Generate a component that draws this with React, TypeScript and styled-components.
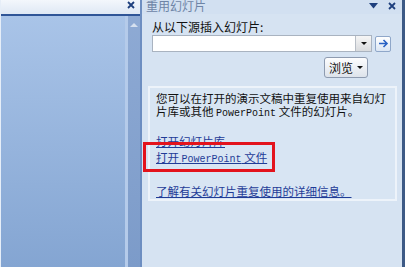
import React from "react";
import styled, { createGlobalStyle } from "styled-components";

const Global = createGlobalStyle`
  html, body { margin: 0; padding: 0; }
  body { width: 405px; height: 267px; overflow: hidden; font-family: "Noto Sans CJK SC", "Noto Sans", sans-serif; }
`;

const Frame = styled.div`
  position: relative;
  display: flex;
  width: 405px;
  height: 267px;
  overflow: hidden;
`;

const LeftPane = styled.div`
  width: 140px;
  display: flex;
  flex-direction: column;
  border-left: 1px solid #e6eef8;
  box-sizing: border-box;
`;

const LeftHeader = styled.div`
  height: 13px;
  background: linear-gradient(#f3f7fc, #dfe8f4);
  border-bottom: 2px solid #2f5597;
  display: flex;
  justify-content: flex-end;
  align-items: flex-start;
  padding: 1px 5px 0 0;
  box-sizing: content-box;
`;

const LeftBody = styled.div`
  flex: 1;
  display: flex;
  background: linear-gradient(#a9c4e8, #84a5d2);
`;

const LeftMain = styled.div`
  flex: 1;
`;

const Scroll = styled.div`
  width: 12px;
  border-left: 3px solid #b5cbea;
  background: linear-gradient(#8eaad4, #7c9bc9);
  display: flex;
  justify-content: center;
  padding-top: 7px;
`;

const UpArrow = styled.div`
  width: 0;
  height: 0;
  border-left: 4px solid transparent;
  border-right: 4px solid transparent;
  border-bottom: 4px solid #d5e0ef;
`;

const Divider = styled.div`
  width: 2px;
  background: #6d8ec1;
`;

const RightPane = styled.div`
  flex: 1;
  display: flex;
  flex-direction: column;
  background: #d6e3f2;
  border-right: 3px solid #3d5a86;
`;

const TitleBar = styled.div`
  height: 14px;
  display: flex;
  align-items: flex-start;
  padding: 0 6px 0 4px;
  background: #d2e0f1;
  overflow: hidden;
`;

const Title = styled.div`
  flex: 1;
  font-size: 12px;
  line-height: 12px;
  color: #6e84a6;
`;

const TitleIcons = styled.div`
  display: flex;
  align-items: center;
  gap: 10px;
  margin-top: 2px;
`;

const Label = styled.div`
  margin: 7px 0 0 10px;
  font-size: 12px;
  line-height: 12px;
  color: #111;
`;

const ComboRow = styled.div`
  display: flex;
  align-items: center;
  gap: 3px;
  margin: 2px 0 0 10px;
`;

const Combo = styled.div`
  width: 220px;
  height: 17px;
  box-sizing: border-box;
  border: 1px solid #a9b3c0;
  background: #fff;
  display: flex;
  justify-content: flex-end;
`;

const ComboBtn = styled.div`
  width: 15px;
  border-left: 1px solid #b8bec6;
  background: linear-gradient(#f6f6f6, #d9dbde);
  display: flex;
  align-items: center;
  justify-content: center;
`;

const SmallTri = styled.div`
  width: 0;
  height: 0;
  border-left: 3px solid transparent;
  border-right: 3px solid transparent;
  border-top: 3px solid #111;
`;

const GoBtn = styled.div`
  width: 16px;
  height: 16px;
  box-sizing: border-box;
  border: 1px solid #8fa7c9;
  border-radius: 2px;
  background: linear-gradient(#ffffff, #dbe6f4);
  display: flex;
  align-items: center;
  justify-content: center;
`;

const BrowseRow = styled.div`
  display: flex;
  justify-content: flex-end;
  margin: 5px 34px 0 0;
`;

const BrowseBtn = styled.div`
  width: 44px;
  height: 21px;
  box-sizing: border-box;
  border: 1px solid #8e9bb0;
  border-radius: 3px;
  background: linear-gradient(#fdfdfe, #dde3eb);
  display: flex;
  align-items: center;
  justify-content: center;
  gap: 4px;
  font-size: 12px;
  color: #111;
`;

const Box = styled.div`
  margin: 8px 5px 0 6px;
  border: 2px solid #edf3fa;
  padding: 4px 4px 2px 6px;
  background: #d8e5f3;
  display: flex;
  flex-direction: column;
  align-items: flex-start;
`;

const Desc = styled.div`
  font-size: 11.5px;
  line-height: 12.5px;
  color: #111;
  width: 233px;
`;

const Mono = styled.span`
  font-family: "Liberation Mono", monospace;
  font-size: 10px;
  line-height: 10px;
`;

const Link = styled.a<{ $gap: number }>`
  margin-top: ${(p) => p.$gap}px;
  font-size: 11.5px;
  line-height: 12px;
  color: #1f3c97;
  text-decoration: underline;
  text-underline-offset: 1px;
  cursor: pointer;
`;

const Highlight = styled.div`
  position: absolute;
  left: 143px;
  top: 142px;
  width: 132px;
  height: 30px;
  box-sizing: border-box;
  border: 3px solid #e3131c;
  pointer-events: none;
`;

const CloseIcon = () => (
  <svg width="8" height="8" viewBox="0 0 8 8">
    <path d="M1 1 L7 7 M7 1 L1 7" stroke="#1e3f7d" strokeWidth="1.8" />
  </svg>
);

const DownIcon = () => (
  <svg width="9" height="6" viewBox="0 0 9 6">
    <path d="M0 0 H9 L4.5 5.5 Z" fill="#1e3f7d" />
  </svg>
);

const ArrowRight = () => (
  <svg width="11" height="9" viewBox="0 0 11 9">
    <path d="M1 4.5 H9 M5.5 1 L9 4.5 L5.5 8" stroke="#2a62c4" strokeWidth="1.6" fill="none" />
  </svg>
);

export default function App() {
  return (
    <>
      <Global />
      <Frame>
        <LeftPane>
          <LeftHeader>
            <CloseIcon />
          </LeftHeader>
          <LeftBody>
            <LeftMain />
            <Scroll>
              <UpArrow />
            </Scroll>
          </LeftBody>
        </LeftPane>
        <Divider />
        <RightPane>
          <TitleBar>
            <Title>重用幻灯片</Title>
            <TitleIcons>
              <DownIcon />
              <CloseIcon />
            </TitleIcons>
          </TitleBar>
          <Label>从以下源插入幻灯片:</Label>
          <ComboRow>
            <Combo>
              <ComboBtn>
                <SmallTri />
              </ComboBtn>
            </Combo>
            <GoBtn>
              <ArrowRight />
            </GoBtn>
          </ComboRow>
          <BrowseRow>
            <BrowseBtn>
              浏览
              <SmallTri />
            </BrowseBtn>
          </BrowseRow>
          <Box>
            <Desc>
              您可以在打开的演示文稿中重复使用来自幻灯片库或其他 <Mono>PowerPoint</Mono> 文件的幻灯片。
            </Desc>
            <Link $gap={16}>打开幻灯片库</Link>
            <Link $gap={4}>
              打开 <Mono>PowerPoint</Mono> 文件
            </Link>
            <Link $gap={20}>了解有关幻灯片重复使用的详细信息。</Link>
          </Box>
        </RightPane>
        <Highlight />
      </Frame>
    </>
  );
}
